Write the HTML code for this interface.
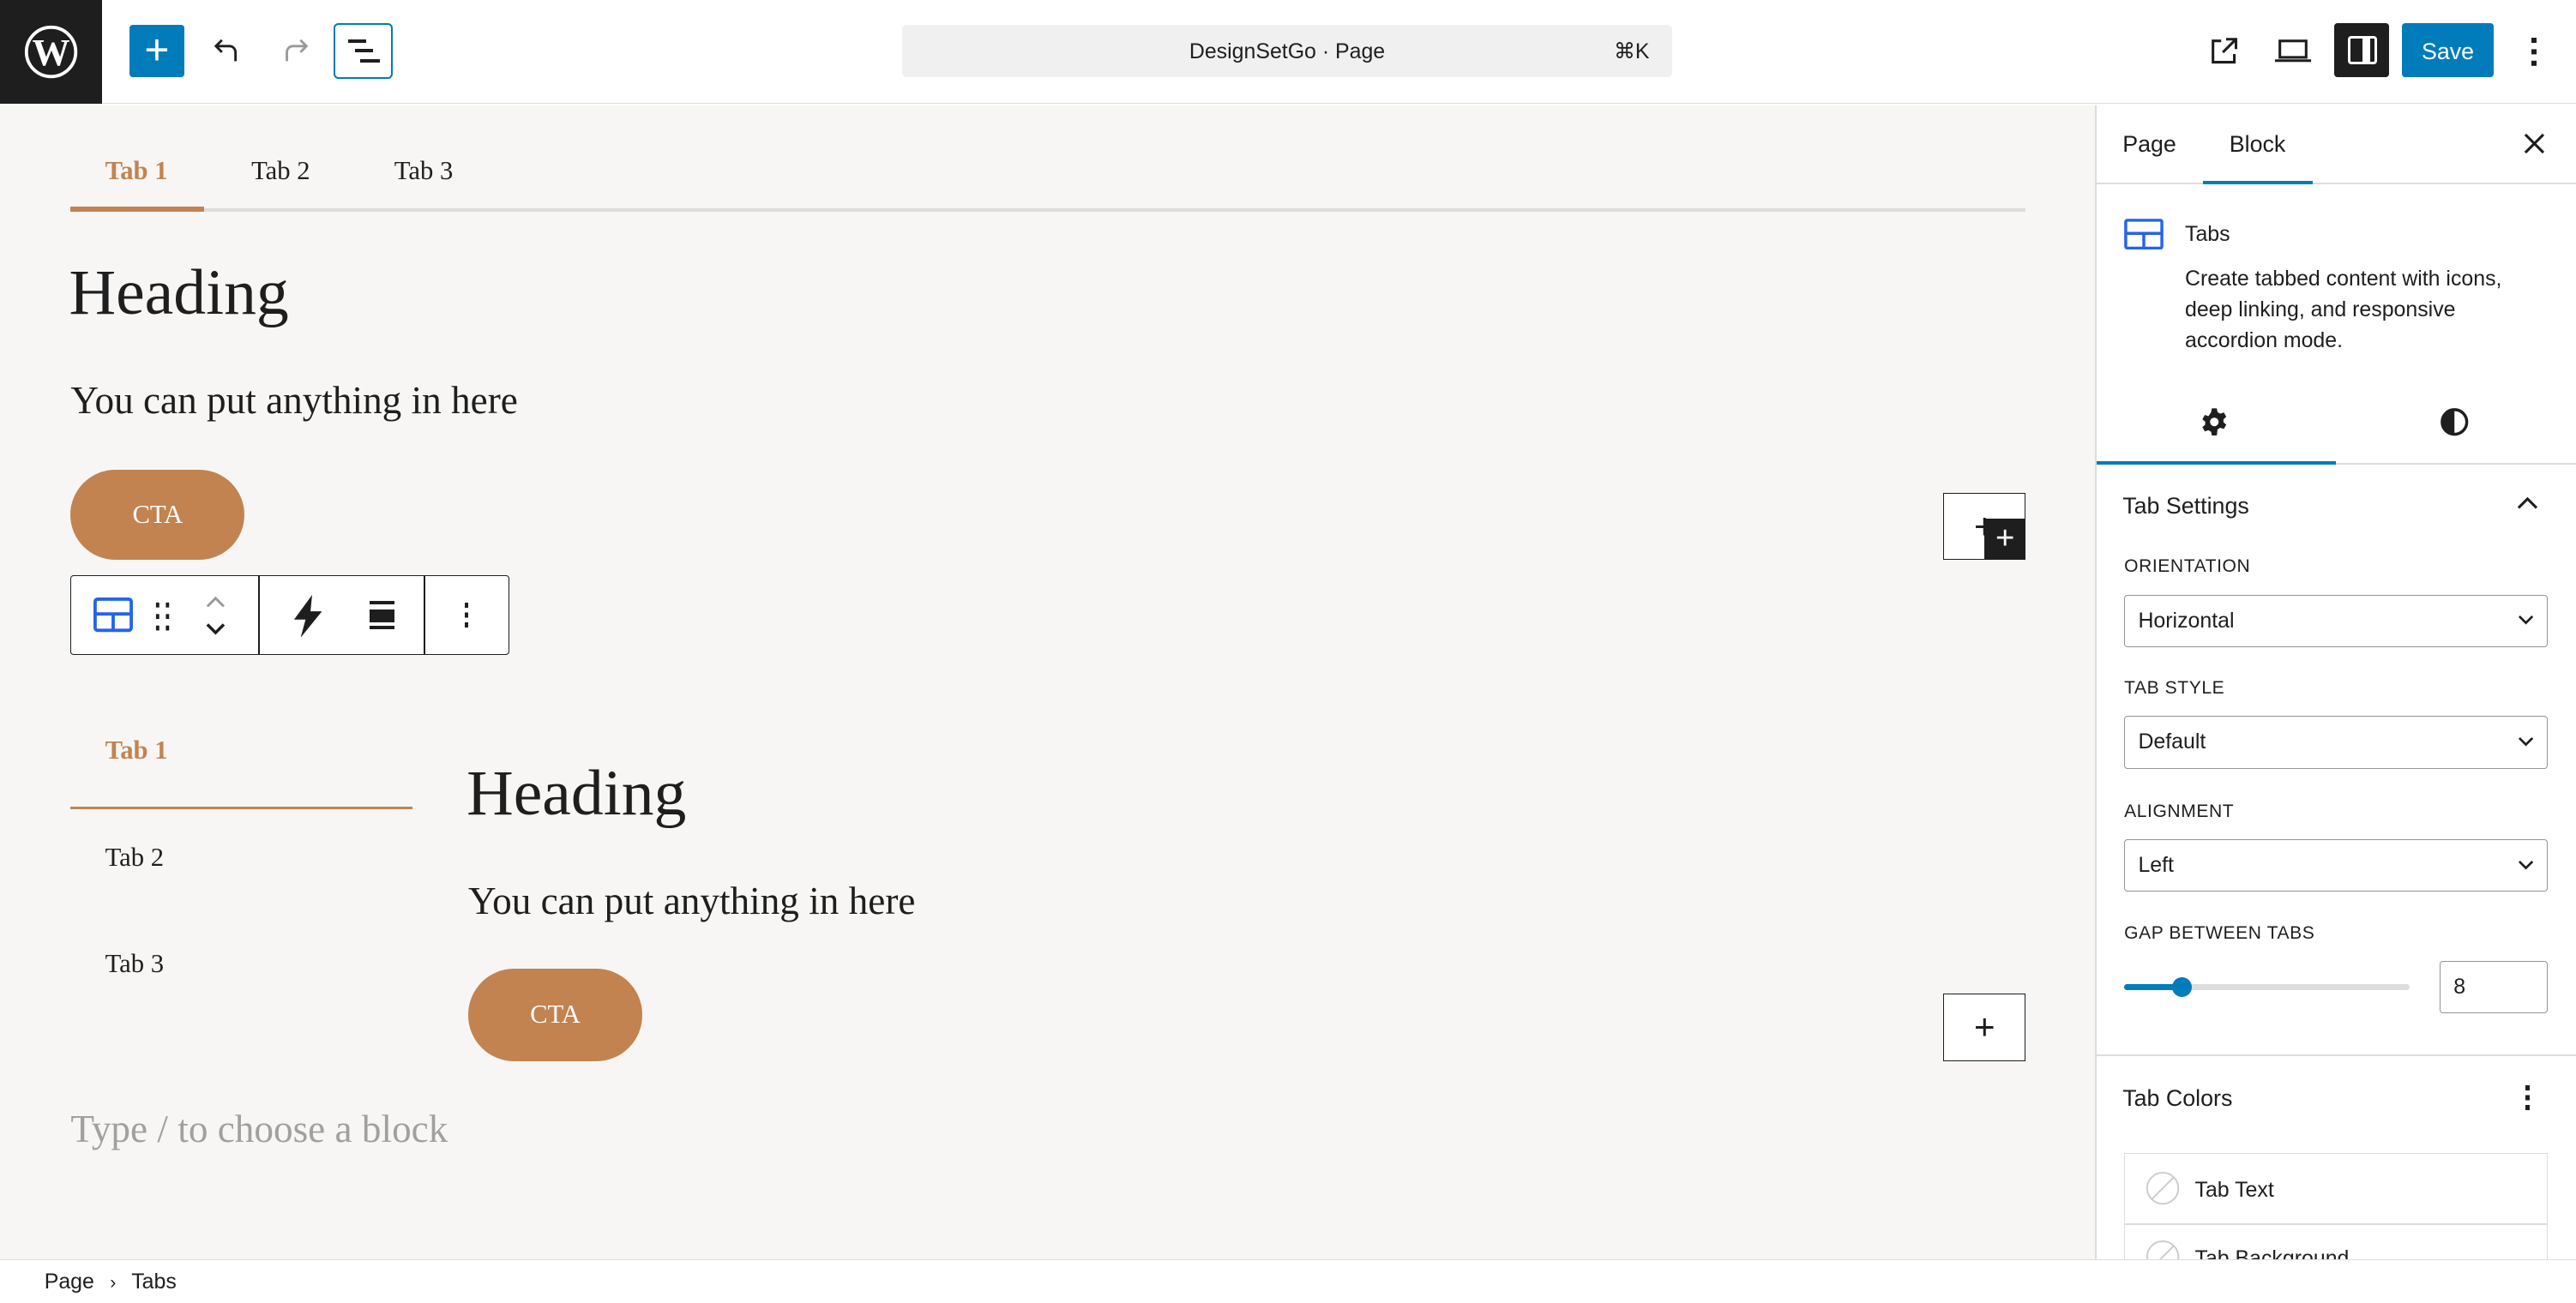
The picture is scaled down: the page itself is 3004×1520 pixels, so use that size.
<!DOCTYPE html>
<html><head><meta charset="utf-8"><style>
*{box-sizing:border-box;margin:0;padding:0}
html,body{width:3004px;height:1520px;overflow:hidden;background:#fff}
#z{zoom:1.9158;width:1568px;height:794px;position:relative;font-family:"Liberation Sans",sans-serif;color:#1e1e1e;overflow:hidden}
.a{position:absolute}
.serif{font-family:"Liberation Serif",serif}
.lbl{font-size:11px;font-weight:500;letter-spacing:.3px}
.sel{border:1px solid #949494;border-radius:2px;height:32px;font-size:13px;padding:0 8px;display:flex;align-items:center;justify-content:space-between}
.cta{background:#c28350;color:#fff;border-radius:28px;display:flex;align-items:center;justify-content:center;font-family:"Liberation Serif",serif;font-size:16px}
.pb{border:1px solid #1e1e1e;background:#fff;display:flex;align-items:center;justify-content:center;font-size:22px;font-weight:300}
</style></head><body><div id="z">
<div class="a" style="left:0;top:0;width:1568px;height:63px;background:#fff;border-bottom:1px solid #ddd"></div>
<div class="a" style="left:0;top:0;width:62px;height:63px;background:#1e1e1e;display:flex;align-items:center;justify-content:center">
<svg width="34" height="34" viewBox="0 0 34 34"><circle cx="17" cy="17" r="15" fill="none" stroke="#fff" stroke-width="2"/><text x="17" y="25" text-anchor="middle" fill="#fff" font-family="Liberation Serif" font-weight="bold" font-size="23">W</text></svg></div>
<div class="a" style="left:79px;top:15px;width:33px;height:32px;background:#007cba;border-radius:2px;color:#fff;font-size:26px;line-height:31px;text-align:center;font-weight:300">+</div>
<svg class="a" style="left:127px;top:20px" width="22" height="22" viewBox="0 0 24 24"><path d="M18 19v-6a4 4 0 0 0-4-4H5M9 5L5 9l4 4" fill="none" stroke="#1e1e1e" stroke-width="1.6"/></svg>
<svg class="a" style="left:169px;top:20px" width="22" height="22" viewBox="0 0 24 24"><path d="M6 19v-6a4 4 0 0 1 4-4h9M15 5l4 4-4 4" fill="none" stroke="#999" stroke-width="1.6"/></svg>
<div class="a" style="left:203px;top:14px;width:36px;height:34px;border:1.5px solid #007cba;border-radius:3px"></div>
<div class="a" style="left:212px;top:24px;width:11px;height:2px;background:#1e1e1e"></div>
<div class="a" style="left:216px;top:30px;width:11px;height:2px;background:#1e1e1e"></div>
<div class="a" style="left:219px;top:36px;width:12px;height:2px;background:#1e1e1e"></div>
<div class="a" style="left:549px;top:15px;width:469px;height:32px;background:#f0f0f0;border-radius:3px;font-size:13px;line-height:33px;text-align:center">DesignSetGo · Page<span class="a" style="right:14px;top:0">⌘K</span></div>
<svg class="a" style="left:1343px;top:21px" width="21" height="21" viewBox="0 0 21 21"><path d="M9 4H4v13h13v-5M12 3h6v6M18 3l-8 8" fill="none" stroke="#1e1e1e" stroke-width="1.6"/></svg>
<svg class="a" style="left:1384px;top:22px" width="24" height="18" viewBox="0 0 24 18"><rect x="4" y="3" width="16" height="10" fill="none" stroke="#1e1e1e" stroke-width="1.6"/><path d="M1 15h22" stroke="#1e1e1e" stroke-width="1.6"/></svg>
<div class="a" style="left:1421px;top:14px;width:33px;height:33px;background:#1e1e1e;border-radius:2px"></div>
<div class="a" style="left:1429px;top:22px;width:18px;height:17px;border:1.6px solid #fff;border-radius:2px"></div>
<div class="a" style="left:1438px;top:22px;width:5px;height:17px;background:#fff"></div>
<div class="a" style="left:1462px;top:14px;width:56px;height:33px;background:#007cba;border-radius:2px;color:#fff;font-size:14px;font-weight:500;line-height:35px;text-align:center">Save</div>
<div class="a" style="left:1541px;top:23px;width:3px;height:3px;background:#1e1e1e;box-shadow:0 7px 0 #1e1e1e,0 14px 0 #1e1e1e"></div>
<div class="a" style="left:0;top:64px;width:1275px;height:703px;background:#f7f6f4"></div>
<div class="a serif" style="left:64px;top:95px;font-size:16px;font-weight:bold;color:#c28350">Tab 1</div>
<div class="a serif" style="left:153px;top:95px;font-size:16px">Tab 2</div>
<div class="a serif" style="left:240px;top:95px;font-size:16px">Tab 3</div>
<div class="a" style="left:43px;top:127px;width:1190px;height:2px;background:#ddd"></div>
<div class="a" style="left:43px;top:126px;width:81px;height:3px;background:#c28350"></div>
<div class="a serif" style="left:42px;top:156px;font-size:39.5px">Heading</div>
<div class="a serif" style="left:43px;top:230px;font-size:23.6px">You can put anything in here</div>
<div class="a cta" style="left:43px;top:286px;width:106px;height:55px">CTA</div>
<div class="a pb" style="left:1183px;top:300px;width:50px;height:41px">+</div>
<div class="a" style="left:1208px;top:316px;width:25px;height:25px;background:#1e1e1e;color:#fff;font-size:20px;line-height:24px;text-align:center">+</div>
<div class="a" style="left:43px;top:350px;width:267px;height:49px;background:#fff;border:1px solid #1e1e1e;border-radius:2px"></div>
<div class="a" style="left:157px;top:350px;width:1px;height:49px;background:#1e1e1e"></div>
<div class="a" style="left:258px;top:350px;width:1px;height:49px;background:#1e1e1e"></div>
<svg class="a" style="left:57px;top:364px" width="24" height="21" viewBox="0 0 24 21"><rect x="1" y="1" width="22" height="19" rx="1.5" fill="none" stroke="#2563eb" stroke-width="2"/><path d="M1 10h22M12 10v10" stroke="#2563eb" stroke-width="2"/></svg>
<svg class="a" style="left:94px;top:366px" width="12" height="18"><g fill="#1e1e1e"><rect x="1" y="1" width="2" height="3"/><rect x="7" y="1" width="2" height="3"/><rect x="1" y="8" width="2" height="3"/><rect x="7" y="8" width="2" height="3"/><rect x="1" y="15" width="2" height="3"/><rect x="7" y="15" width="2" height="3"/></g></svg>
<svg class="a" style="left:124px;top:362px" width="14" height="28"><path d="M2 7l5-5 5 5" fill="none" stroke="#999" stroke-width="1.5"/><path d="M2 18l5 5 5-5" fill="none" stroke="#1e1e1e" stroke-width="1.8"/></svg>
<svg class="a" style="left:178px;top:362px" width="20" height="26" viewBox="0 0 20 26"><path d="M12 0L1 15h7l-3 11L18 10h-7z" fill="#1e1e1e"/></svg>
<div class="a" style="left:225px;top:366px;width:15px;height:2px;background:#1e1e1e"></div>
<div class="a" style="left:225px;top:371px;width:15px;height:8px;background:#1e1e1e"></div>
<div class="a" style="left:225px;top:381px;width:15px;height:2px;background:#1e1e1e"></div>
<div class="a" style="left:283px;top:367px;width:2px;height:3px;background:#1e1e1e;box-shadow:0 6px 0 #1e1e1e,0 12px 0 #1e1e1e"></div>
<div class="a serif" style="left:64px;top:448px;font-size:16px;font-weight:bold;color:#c28350">Tab 1</div>
<div class="a" style="left:43px;top:491px;width:208px;height:2px;background:#c28350"></div>
<div class="a serif" style="left:64px;top:513px;font-size:16px">Tab 2</div>
<div class="a serif" style="left:64px;top:578px;font-size:16px">Tab 3</div>
<div class="a serif" style="left:284px;top:461px;font-size:39.5px">Heading</div>
<div class="a serif" style="left:285px;top:535px;font-size:23.6px">You can put anything in here</div>
<div class="a cta" style="left:285px;top:590px;width:106px;height:56px">CTA</div>
<div class="a pb" style="left:1183px;top:605px;width:50px;height:41px">+</div>
<div class="a serif" style="left:43px;top:674px;font-size:23.6px;color:#a0a0a0">Type / to choose a block</div>
<div class="a" style="left:0;top:767px;width:1568px;height:27px;background:#fff;border-top:1px solid #ddd"></div>
<div class="a" style="left:27px;top:773px;font-size:13px">Page <span style="margin:0 6px;font-size:11px">&#x203A;</span> Tabs</div>
<div class="a" style="left:1275px;top:64px;width:1px;height:703px;background:#ddd"></div>
<div class="a" style="left:1292px;top:80px;font-size:14px">Page</div>
<div class="a" style="left:1357px;top:80px;font-size:14px">Block</div>
<div class="a" style="left:1276px;top:111px;width:292px;height:1px;background:#ddd"></div>
<div class="a" style="left:1341px;top:110px;width:67px;height:2px;background:#007cba"></div>
<svg class="a" style="left:1536px;top:81px" width="13" height="13"><path d="M1 1l11 11M12 1L1 12" stroke="#1e1e1e" stroke-width="1.6"/></svg>
<svg class="a" style="left:1293px;top:133px" width="24" height="19" viewBox="0 0 24 19"><rect x="1" y="1" width="22" height="17" rx="1" fill="none" stroke="#2563eb" stroke-width="1.8"/><path d="M1 9h22M12 9v9" stroke="#2563eb" stroke-width="1.8"/></svg>
<div class="a" style="left:1330px;top:135px;font-size:13px;font-weight:500">Tabs</div>
<div class="a" style="left:1330px;top:160px;width:218px;font-size:13px;line-height:19px">Create tabbed content with icons, deep linking, and responsive accordion mode.</div>
<svg class="a" style="left:1339px;top:248px" width="18" height="18" viewBox="0 0 24 24"><path fill="#1e1e1e" d="M10 1h4l.6 3 2.2 1.3 2.9-1 2 3.5-2.3 2v2.4l2.3 2-2 3.5-2.9-1-2.2 1.3L14 23h-4l-.6-3-2.2-1.3-2.9 1-2-3.5 2.3-2v-2.4l-2.3-2 2-3.5 2.9 1L9.4 4z"/><circle cx="12" cy="12" r="3.5" fill="#fff"/></svg>
<svg class="a" style="left:1485px;top:248px" width="18" height="18" viewBox="0 0 18 18"><circle cx="9" cy="9" r="7.5" fill="none" stroke="#1e1e1e" stroke-width="1.8"/><path d="M9 1.5a7.5 7.5 0 0 0 0 15z" fill="#1e1e1e"/></svg>
<div class="a" style="left:1276px;top:282px;width:292px;height:1px;background:#ddd"></div>
<div class="a" style="left:1276px;top:281px;width:146px;height:2px;background:#007cba"></div>
<div class="a" style="left:1292px;top:300px;font-size:14px;font-weight:500">Tab Settings</div>
<svg class="a" style="left:1532px;top:302px" width="13" height="9"><path d="M1 7l5.5-5.5L12 7" fill="none" stroke="#1e1e1e" stroke-width="1.6"/></svg>
<div class="a lbl" style="left:1293px;top:339px">ORIENTATION</div>
<div class="a sel" style="left:1293px;top:362px;width:258px">Horizontal<svg width="10" height="7"><path d="M1 1l4 4 4-4" fill="none" stroke="#1e1e1e" stroke-width="1.4"/></svg></div>
<div class="a lbl" style="left:1293px;top:413px">TAB STYLE</div>
<div class="a sel" style="left:1293px;top:436px;width:258px">Default<svg width="10" height="7"><path d="M1 1l4 4 4-4" fill="none" stroke="#1e1e1e" stroke-width="1.4"/></svg></div>
<div class="a lbl" style="left:1293px;top:488px">ALIGNMENT</div>
<div class="a sel" style="left:1293px;top:511px;width:258px">Left<svg width="10" height="7"><path d="M1 1l4 4 4-4" fill="none" stroke="#1e1e1e" stroke-width="1.4"/></svg></div>
<div class="a lbl" style="left:1293px;top:562px">GAP BETWEEN TABS</div>
<div class="a" style="left:1293px;top:599px;width:174px;height:4px;background:#ddd;border-radius:2px"></div>
<div class="a" style="left:1293px;top:599px;width:35px;height:4px;background:#007cba;border-radius:2px"></div>
<div class="a" style="left:1322px;top:595px;width:12px;height:12px;background:#007cba;border-radius:50%"></div>
<div class="a sel" style="left:1485px;top:585px;width:66px">8</div>
<div class="a" style="left:1276px;top:642px;width:292px;height:1px;background:#ddd"></div>
<div class="a" style="left:1292px;top:661px;font-size:14px;font-weight:500">Tab Colors</div>
<div class="a" style="left:1537px;top:661px;width:3px;height:3px;background:#1e1e1e;box-shadow:0 6px 0 #1e1e1e,0 12px 0 #1e1e1e"></div>
<div class="a" style="left:1293px;top:702px;width:258px;height:80px;border:1px solid #ddd"></div>
<div class="a" style="left:1293px;top:745px;width:258px;height:1px;background:#ddd"></div>
<svg class="a" style="left:1306px;top:713px" width="21" height="21"><circle cx="10.5" cy="10.5" r="9.5" fill="#fff" stroke="#ccc"/><path d="M4 17L17 4" stroke="#ccc"/></svg>
<div class="a" style="left:1336px;top:717px;font-size:13px">Tab Text</div>
<svg class="a" style="left:1306px;top:755px" width="21" height="21"><circle cx="10.5" cy="10.5" r="9.5" fill="#fff" stroke="#ccc"/><path d="M4 17L17 4" stroke="#ccc"/></svg>
<div class="a" style="left:1336px;top:759px;font-size:13px">Tab Background</div>
<div class="a" style="left:1276px;top:767px;width:292px;height:27px;background:#fff;border-top:1px solid #ddd"></div>
</div></body></html>
